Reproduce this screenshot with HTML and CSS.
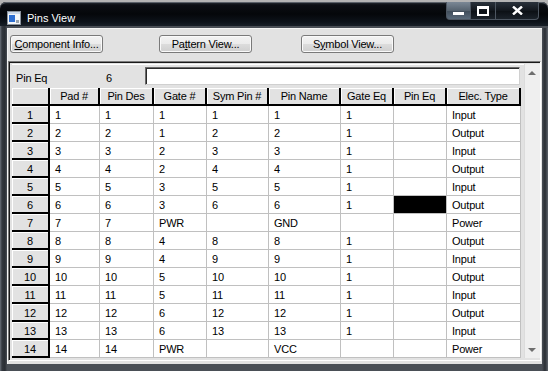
FILE: index.html
```html
<!DOCTYPE html>
<html lang="en">
<head>
  <meta charset="UTF-8" />
  <title>Pins View</title>
  <link rel="stylesheet" href="styles.css">
</head>
<body>
  <div class="window">
    <div class="titlebar">
      <svg class="app-icon" width="14" height="14" viewBox="0 0 14 14">
        <rect x="0.5" y="0.5" width="13" height="13" fill="#f4f6f8" stroke="#8a929c"/>
        <rect x="1" y="1" width="12" height="2" fill="#c9d6e6"/>
        <rect x="2" y="4" width="6" height="7" fill="#2f6fd0"/>
        <rect x="9" y="9" width="3" height="3" fill="#9aa3ad"/>
      </svg>
      <span class="title">Pins View</span>
      <div class="caption-btns">
        <div class="cap cap-min"><span class="min-bar"></span></div>
        <div class="cap cap-max"><span class="max-box"></span></div>
        <div class="cap cap-close">
          <svg width="11" height="9" viewBox="0 0 11 9">
            <path d="M1 0.5 L10 8.5 M10 0.5 L1 8.5" stroke="#fff" stroke-width="2.4"/>
          </svg>
        </div>
      </div>
    </div>

    <div class="client">
      <div class="toolbar">
        <button class="btn"><u>C</u>omponent Info...</button>
        <button class="btn btn-pattern">Pa<u>t</u>tern View...</button>
        <button class="btn btn-symbol">S<u>y</u>mbol View...</button>
      </div>

      <div class="panel">
        <div class="main">
          <div class="eq-row">
            <span class="eq-label">Pin Eq</span>
            <span class="eq-value">6</span>
            <div class="eq-input"></div>
          </div>
          <div id="grid" class="grid"></div>
        </div>
        <div class="scrollbar">
          <div class="arrow"><span class="tri-up"></span></div>
          <div class="track"></div>
          <div class="arrow"><span class="tri-down"></span></div>
        </div>
      </div>
    </div>
  </div>

  <script>
    const colunas = ["Pad #", "Pin Des", "Gate #", "Sym Pin #", "Pin Name", "Gate Eq", "Pin Eq", "Elec. Type"];
    const pinos = [
      ["1", "1", "1", "1", "1", "1", "", "Input"],
      ["2", "2", "1", "2", "2", "1", "", "Output"],
      ["3", "3", "2", "3", "3", "1", "", "Input"],
      ["4", "4", "2", "4", "4", "1", "", "Output"],
      ["5", "5", "3", "5", "5", "1", "", "Input"],
      ["6", "6", "3", "6", "6", "1", "#", "Output"],
      ["7", "7", "PWR", "", "GND", "", "", "Power"],
      ["8", "8", "4", "8", "8", "1", "", "Output"],
      ["9", "9", "4", "9", "9", "1", "", "Input"],
      ["10", "10", "5", "10", "10", "1", "", "Output"],
      ["11", "11", "5", "11", "11", "1", "", "Input"],
      ["12", "12", "6", "12", "12", "1", "", "Output"],
      ["13", "13", "6", "13", "13", "1", "", "Input"],
      ["14", "14", "PWR", "", "VCC", "", "", "Power"]
    ];

    let html = `<div class="hdr corner"></div>`;
    colunas.forEach(c => { html += `<div class="hdr">${c}</div>`; });
    pinos.forEach((linha, i) => {
      html += `<div class="hdr rowhdr">${i + 1}</div>`;
      linha.forEach(v => {
        html += v === "#" ? `<div class="cell selected"></div>` : `<div class="cell">${v}</div>`;
      });
    });
    document.getElementById("grid").innerHTML = html;
  </script>
</body>
</html>
```

FILE: styles.css
```css
body {
  margin: 0;
  padding-top: 2px;
  background: #b4b4b4;
  font-family: "Liberation Sans", Arial, sans-serif;
  font-size: 11px;
  letter-spacing: -0.2px;
  color: #000;
  overflow: hidden;
}
.window {
  width: 548px;
  height: 369px;
  box-sizing: border-box;
  border-radius: 6px 6px 0 0;
  background: linear-gradient(to right, #6a7079 0, #33383f 2px, #2a2e34 5px, #4a4f56 7px);
  padding: 0 6px 7px 7px;
  display: flex;
  flex-direction: column;
  position: relative;
}
.window::after {
  content: "";
  position: absolute;
  right: 0;
  top: 26px;
  bottom: 0;
  width: 6px;
  background: linear-gradient(to right, #4a4f56, #2a2e34 3px, #5d636b);
}
.titlebar {
  height: 26px;
  margin: 0 -6px 0 -7px;
  padding-left: 7px;
  display: flex;
  align-items: flex-start;
  border-radius: 6px 6px 0 0;
  background: linear-gradient(to bottom, #2a3038 0, #0b0e13 3px, #05070a 12px, #0d131a 20px, #1e252e 26px);
  box-shadow: inset 0 1px 0 #5a6068;
}
.app-icon {
  margin-top: 9px;
}
.title {
  margin-left: 6px;
  margin-top: 10px;
  color: #fff;
  font-size: 11px;
  letter-spacing: 0;
}
.caption-btns {
  margin-left: auto;
  margin-right: 9px;
  display: flex;
}
.cap {
  height: 18px;
  width: 25px;
  box-sizing: border-box;
  border: 1px solid #4d5661;
  border-top: none;
  border-left: none;
  background: linear-gradient(to bottom, #2a323c, #12171d 50%, #0b0f14 51%, #1b222a);
  display: flex;
  align-items: center;
  justify-content: center;
}
.cap-min {
  border-left: 1px solid #4d5661;
  border-radius: 0 0 0 4px;
  background: linear-gradient(to bottom, #7b8896, #56636f 50%, #3f4c59 51%, #5a6a7a);
}
.cap-close {
  width: 43px;
  border-radius: 0 0 4px 0;
}
.min-bar {
  width: 11px;
  height: 3px;
  margin-top: 6px;
  background: #fff;
}
.max-box {
  width: 8px;
  height: 5px;
  border: 2px solid #fff;
  border-top-width: 3px;
}
.client {
  flex: 1;
  background: #e2e2e2;
  box-shadow: inset 1px 1px 0 #f4f4f4;
  margin-top: 2px;
  padding: 7px 1px 3px 1px;
  display: flex;
  flex-direction: column;
}
.toolbar {
  display: flex;
  padding-left: 2px;
}
.btn {
  width: 93px;
  height: 18px;
  padding: 0;
  font-family: inherit;
  font-size: 11px;
  letter-spacing: -0.2px;
  color: #000;
  border: 1px solid #7a7a7a;
  border-radius: 3px;
  background: linear-gradient(to bottom, #f3f3f3, #ebebeb 50%, #dcdcdc 51%, #cfcfcf);
  box-shadow: inset 0 0 0 1px #fafafa;
}
.btn-pattern {
  margin-left: 56px;
}
.btn-symbol {
  margin-left: 49px;
}
.panel {
  margin-top: 8px;
  flex: 1;
  display: flex;
  border: 1px solid;
  border-color: #7a7a7a #ffffff #ffffff #7a7a7a;
  box-shadow: inset 1px 1px 0 #1a1a1a;
  padding: 2px 0 2px 3px;
}
.main {
  width: 512px;
  display: flex;
  flex-direction: column;
}
.eq-row {
  height: 24px;
  display: flex;
  align-items: flex-start;
  box-shadow: inset 0 1px 0 #fff;
}
.eq-label {
  width: 90px;
  padding-left: 4px;
  margin-top: 8px;
}
.eq-value {
  width: 39px;
  margin-top: 8px;
}
.eq-input {
  margin-top: 3px;
  width: 375px;
  height: 18px;
  box-sizing: border-box;
  background: #fff;
  border: 1px solid;
  border-color: #6a6a6a #d0d0d0 #d0d0d0 #6a6a6a;
  box-shadow: inset 1px 1px 0 #2a2a2a;
}
.grid {
  display: grid;
  grid-template-columns: 38px 50px 54px 53px 62px 72px 53px 53px 74px;
  grid-template-rows: 18px;
  grid-auto-rows: 18px;
}
.hdr {
  box-sizing: border-box;
  background: #e2e2e2;
  border-right: 2px solid #000;
  border-bottom: 2px solid #000;
  box-shadow: inset 1px 1px 0 #fff;
  text-align: center;
  padding-top: 1px;
  line-height: 15px;
}
.rowhdr {
  padding-top: 2px;
  line-height: 14px;
}
.cell {
  box-sizing: border-box;
  background: #fff;
  border-right: 1px solid #c0c0c0;
  border-bottom: 1px solid #c0c0c0;
  padding-left: 5px;
  padding-top: 2px;
  line-height: 15px;
  white-space: nowrap;
}
.cell.selected {
  background: #000;
}
.scrollbar {
  width: 16px;
  display: flex;
  flex-direction: column;
  background: #efefef;
  box-shadow: inset 1px 0 0 #dcdcdc;
}
.arrow {
  height: 17px;
  display: flex;
  align-items: center;
  justify-content: center;
}
.track {
  flex: 1;
}
.tri-up {
  width: 0;
  height: 0;
  border-left: 4px solid transparent;
  border-right: 4px solid transparent;
  border-bottom: 4px solid #6e6e6e;
}
.tri-down {
  width: 0;
  height: 0;
  border-left: 4px solid transparent;
  border-right: 4px solid transparent;
  border-top: 4px solid #6e6e6e;
}
```
